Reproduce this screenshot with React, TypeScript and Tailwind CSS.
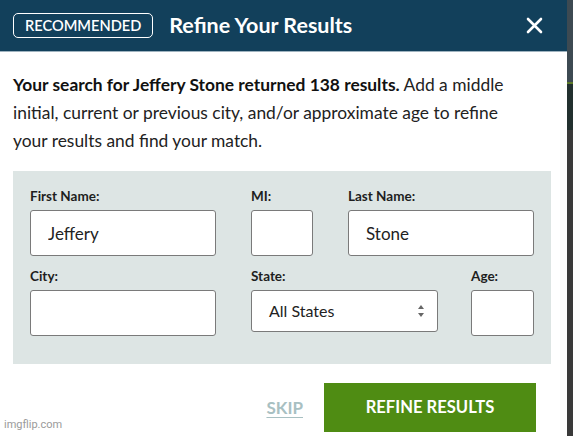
import { useState } from 'react';

function Field({
  label,
  width,
  value,
  height = 'h-[46px]',
}: {
  label: string;
  width: string;
  value?: string;
  height?: string;
}) {
  return (
    <div className={`flex flex-col ${width}`}>
      <label className="h-[18px] leading-[18px] text-[13.5px] font-bold text-[#1e1e1e] mb-[5px]">{label}</label>
      <input
        defaultValue={value}
        className={`${height} w-full bg-white border border-[#7a7a7a] rounded-[3px] px-[17px] text-[17px] text-[#222] outline-none`}
      />
    </div>
  );
}

function StateSelect() {
  return (
    <div className="flex flex-col w-[187px]">
      <label className="h-[18px] leading-[18px] text-[13.5px] font-bold text-[#1e1e1e] mb-[5px]">State:</label>
      <div className="h-[42px] w-full bg-white border border-[#7a7a7a] rounded-[3px] pl-[17px] pr-[12px] flex items-center justify-between">
        <span className="text-[16px] text-[#222]">All States</span>
        <svg width="8" height="14" viewBox="0 0 8 14">
          <path d="M4 1 L7 5 L1 5 Z" fill="#666" />
          <path d="M4 13 L7 9 L1 9 Z" fill="#666" />
        </svg>
      </div>
    </div>
  );
}

export default function App() {
  const [open, setOpen] = useState(true);

  return (
    <div className="relative flex w-[573px] h-[436px] overflow-hidden bg-white font-['Lato',sans-serif]">
      <div className="w-[567px] shrink-0 flex flex-col bg-white">
        <header className="h-[52px] shrink-0 bg-[#12405b] border-b border-[#9fb3bf] flex items-center pl-[13px] pr-[24px]">
          <span className="h-[25px] px-[11px] flex items-center border border-white rounded-[5px] text-white text-[14.6px] font-semibold">
            RECOMMENDED
          </span>
          <h1 className="ml-[16px] text-white text-[21.5px] font-bold">Refine Your Results</h1>
          <button className="ml-auto text-white" onClick={() => setOpen(!open)}>
            <svg width="17" height="17" viewBox="0 0 17 17">
              <path d="M2 2 L15 15 M15 2 L2 15" stroke="white" strokeWidth="2.6" strokeLinecap="round" />
            </svg>
          </button>
        </header>

        <p className="pl-[13px] pr-[36px] pt-[19px] text-[17.4px] leading-[28px] text-[#222]">
          <span className="font-bold text-[#111]">Your search for Jeffery Stone returned 138 results.</span> Add a
          middle initial, current or previous city, and/or approximate age to refine your results and find your match.
        </p>

        <div className="mx-[13px] mt-[16px] w-[538px] bg-[#dde5e4] px-[17px] pt-[16px] pb-[28px] flex flex-col gap-[11px]">
          <div className="flex gap-[35px]">
            <Field label="First Name:" width="w-[186px]" value="Jeffery" />
            <Field label="MI:" width="w-[62px]" />
            <Field label="Last Name:" width="w-[186px]" value="Stone" />
          </div>
          <div className="flex items-start">
            <Field label="City:" width="w-[186px]" />
            <div className="ml-[35px]">
              <StateSelect />
            </div>
            <div className="ml-[33px]">
              <Field label="Age:" width="w-[63px]" />
            </div>
          </div>
        </div>

        <div className="flex items-center justify-end pr-[31px] mt-[19px]">
          <a className="text-[17px] font-bold text-[#a8c0c2] underline underline-offset-[3px] mr-[21px]">SKIP</a>
          <button className="w-[212px] h-[49px] bg-[#4f8c13] text-white text-[16.6px] font-bold">REFINE RESULTS</button>
        </div>
      </div>

      <div className="flex-1 flex flex-col bg-[#4a4a4a]">
        <div className="h-[82px] bg-[#3d4a52]" />
        <div className="h-[2px] bg-[#5d7a2a]" />
        <div className="h-[46px] bg-[#22302f]" />
        <div className="flex-1 bg-[#3a3a3a]" />
      </div>

      <span className="absolute left-[4px] bottom-[3px] text-[11px] text-[#9a9a9a] font-['Roboto',sans-serif]">
        imgflip.com
      </span>
    </div>
  );
}
